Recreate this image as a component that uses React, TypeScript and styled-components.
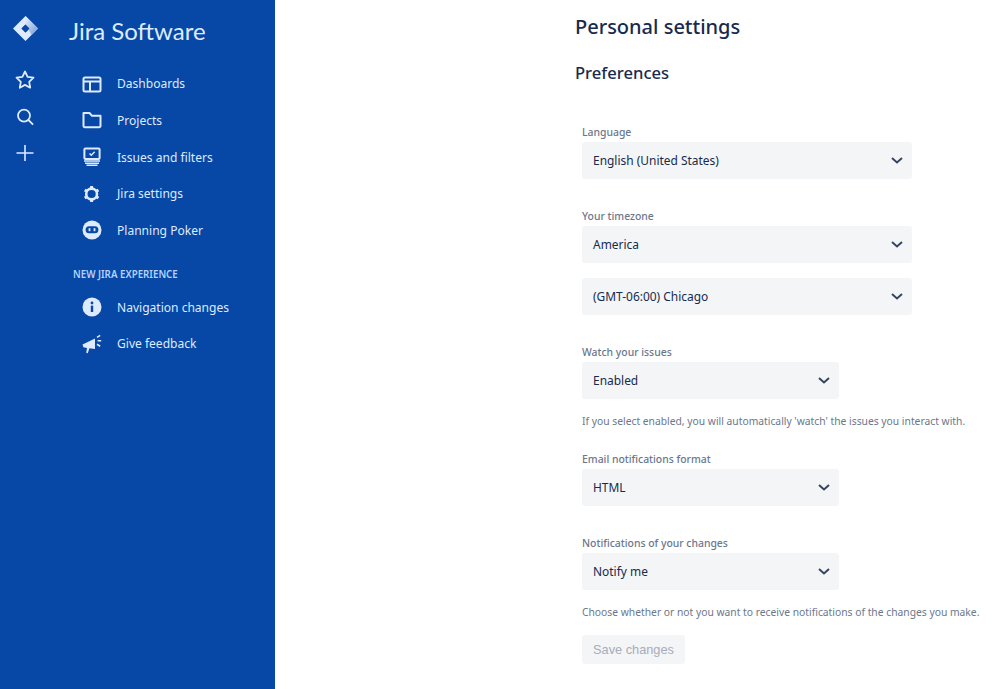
import React from "react";
import styled, { createGlobalStyle } from "styled-components";

const Global = createGlobalStyle`
  html, body { margin: 0; padding: 0; background: #fff; }
  body { font-family: "Noto Sans", "Open Sans", sans-serif; overflow: hidden; }
`;

const Page = styled.div`
  display: flex;
  width: 999px;
  height: 689px;
  overflow: hidden;
`;

const Sidebar = styled.aside`
  flex: 0 0 275px;
  display: flex;
  background: #0747a6;
  color: #deebff;
`;

const Rail = styled.div`
  flex: 0 0 51px;
  display: flex;
  flex-direction: column;
  align-items: center;
  padding-top: 15px;
  color: #deebff;
`;

const RailLogo = styled.div`
  display: flex;
  height: 28px;
  margin-bottom: 19px;
`;

const RailButton = styled.div`
  display: flex;
  align-items: center;
  justify-content: center;
  height: 36.5px;
  margin-right: 1px;
`;

const SideNav = styled.nav`
  flex: 1;
  display: flex;
  flex-direction: column;
  padding-left: 18px;
`;

const Product = styled.div`
  font-family: "Lato", sans-serif;
  font-size: 24px;
  line-height: 30px;
  color: #deebff;
  height: 65.5px;
  padding-top: 16px;
  box-sizing: border-box;
`;

const NavItem = styled.a`
  display: flex;
  align-items: center;
  height: 36.67px;
  padding-left: 12.5px;
  font-size: 12.05px;
  color: #deebff;
`;

const NavIcon = styled.span`
  display: flex;
  justify-content: center;
  width: 20px;
  margin-right: 15.5px;
`;

const NavHeading = styled.div`
  margin: 19px 0 7px 4px;
  height: 14px;
  line-height: 14px;
  font-size: 9.75px;
  font-weight: 600;
  color: #b3d4ff;
  text-transform: uppercase;
`;

const Main = styled.main`
  flex: 1;
  padding: 11px 0 0 300px;
  min-width: 0;
`;

const Title = styled.h1`
  margin: 0;
  font-size: 20px;
  line-height: 32px;
  font-weight: 500;
  color: #172b4d;
`;

const Subtitle = styled.h2`
  margin: 14px 0 0;
  font-size: 16.6px;
  line-height: 32px;
  font-weight: 500;
  color: #172b4d;
`;

const Form = styled.form`
  padding: 35px 0 0 7px;
  width: 430px;
`;

const Field = styled.div<{ $gap?: number }>`
  margin-bottom: ${(p) => p.$gap ?? 0}px;
`;

const Label = styled.div`
  font-size: 10.4px;
  line-height: 16px;
  height: 16px;
  font-weight: 500;
  color: #6b778c;
  margin-bottom: 2px;
`;

const Select = styled.div<{ $narrow?: boolean; $mt?: number }>`
  display: flex;
  align-items: center;
  justify-content: space-between;
  box-sizing: border-box;
  width: ${(p) => (p.$narrow ? 257 : 330)}px;
  height: 37px;
  margin-top: ${(p) => p.$mt ?? 0}px;
  padding: 0 7px 0 11px;
  background: #f4f5f7;
  border-radius: 3px;
  font-size: 11.95px;
  color: #172b4d;
`;

const ChevronSlot = styled.svg`
  position: relative;
  top: -1px;
`;

const Help = styled.div`
  margin-top: 14px;
  font-size: 10.3px;
  line-height: 16px;
  color: #6b778c;
  white-space: nowrap;
`;

const SaveButton = styled.button`
  display: block;
  width: 103px;
  height: 29px;
  margin-top: 15px;
  padding: 0;
  border: 0;
  border-radius: 3px;
  background: #f4f5f7;
  color: #a5adba;
  font-family: "Liberation Sans", Arial, sans-serif;
  font-size: 12.75px;
`;

const Chevron = () => (
  <ChevronSlot width="16" height="16" viewBox="0 0 16 16" fill="none">
    <path d="M3 6 8 10.4 13 6" stroke="#344563" strokeWidth="2" />
  </ChevronSlot>
);

const Logo = () => (
  <svg width="27" height="27" viewBox="0 0 27 27">
    <defs>
      <linearGradient id="lg" x1="0.2" y1="0" x2="0.9" y2="0.8">
        <stop offset="0" stopColor="#deebff" />
        <stop offset="1" stopColor="#86a6da" />
      </linearGradient>
    </defs>
    <path d="M13.5 1 26 13.5 13.5 26 1 13.5Z M13.5 9.5 9.5 13.5 13.5 17.5 17.5 13.5Z" fill="#deebff" fillRule="evenodd" />
    <path d="M13.5 1 26 13.5 19.5 20 13.5 9.5Z" fill="url(#lg)" />
    <path d="M13.5 9.5 17.5 13.5 13.5 17.5 9.5 13.5Z" fill="#0747a6" />
  </svg>
);

const stroke = { fill: "none", stroke: "currentColor", strokeWidth: 2 } as const;

const Star = () => (
  <svg width="20" height="20" viewBox="0 0 20 20" fill="none" stroke="currentColor" strokeWidth="1.8" strokeLinejoin="round">
    <path d="M10 1.5l2.6 5.4 5.9.8-4.3 4.1 1 5.9-5.2-2.8-5.2 2.8 1-5.9-4.3-4.1 5.9-.8z" />
  </svg>
);
const Search = () => (
  <svg width="20" height="20" viewBox="0 0 20 20" fill="none" stroke="currentColor" strokeWidth="1.8">
    <circle cx="9" cy="8.6" r="6" />
    <path d="M13.4 13 17.6 17.2" strokeLinecap="round" />
  </svg>
);
const Plus = () => (
  <svg width="20" height="20" viewBox="0 0 20 20" fill="none" stroke="currentColor" strokeWidth="1.6">
    <path d="M10 2v16M1.5 10h17" />
  </svg>
);
const Dashboards = () => (
  <svg width="20" height="20" viewBox="0 0 20 20" {...stroke}>
    <rect x="1.5" y="3.5" width="17" height="14" rx="1.5" />
    <path d="M1.5 7.5h17M8 7.5v10" />
  </svg>
);
const Folder = () => (
  <svg width="20" height="20" viewBox="0 0 20 20" {...stroke} strokeLinejoin="round">
    <path d="M1.5 3h6l2.5 2.8h8.5v10.2a1.2 1.2 0 0 1-1.2 1.2H2.7a1.2 1.2 0 0 1-1.2-1.2z" />
  </svg>
);
const Issues = () => (
  <svg width="20" height="20" viewBox="0 0 20 20" fill="none">
    <rect x="2.4" y="1.5" width="15.2" height="10.5" rx="1" stroke="currentColor" strokeWidth="2" />
    <path d="M7.5 6.5 9.3 8.3 12.7 4.8" stroke="currentColor" strokeWidth="1.5" />
    <path d="M2 14h16M3 16.2h14M4.5 18.3h11" stroke="currentColor" strokeWidth="1.4" />
  </svg>
);
const Gear = () => (
  <svg width="20" height="20" viewBox="0 0 20 20" fill="none">
    <circle cx="9.6" cy="10" r="5.4" stroke="currentColor" strokeWidth="2.6" />
    <path d="M9.6 2v2.6M9.6 15.4V18M2.7 6l2.3 1.3M14.2 12.7l2.3 1.3M2.7 14l2.3-1.3M14.2 7.3 16.5 6" stroke="currentColor" strokeWidth="3" />
  </svg>
);
const Poker = () => (
  <svg width="20" height="20" viewBox="0 0 20 20">
    <circle cx="10" cy="10" r="9.5" fill="currentColor" />
    <rect x="3.6" y="6.2" width="12.8" height="7" rx="3.5" fill="#0747a6" />
    <rect x="6.6" y="8.2" width="1.8" height="3" fill="#deebff" />
    <rect x="11.6" y="8.2" width="1.8" height="3" fill="#deebff" />
  </svg>
);
const Info = () => (
  <svg width="20" height="20" viewBox="0 0 20 20">
    <circle cx="10" cy="10" r="9.5" fill="currentColor" />
    <rect x="8.8" y="8.6" width="2.4" height="6.4" fill="#0747a6" />
    <circle cx="10" cy="6" r="1.4" fill="#0747a6" />
  </svg>
);
const Megaphone = () => (
  <svg width="20" height="20" viewBox="0 0 20 20" fill="currentColor">
    <path d="M.5 10.5 13 4.5v10.5l-5.6-.7-1.6 5-1.6-.6.8-4.8-3.6-.6z" />
    <path d="M15 3.4l3.2-2M15.6 6.8h3.6M15 10.2l3.2 2" stroke="currentColor" strokeWidth="1.6" fill="none" />
  </svg>
);

const Dropdown = ({ value, narrow, mt }: { value: string; narrow?: boolean; mt?: number }) => (
  <Select $narrow={narrow} $mt={mt}>
    {value}
    <Chevron />
  </Select>
);

const items = [
  ["Dashboards", <Dashboards />],
  ["Projects", <Folder />],
  ["Issues and filters", <Issues />],
  ["Jira settings", <Gear />],
  ["Planning Poker", <Poker />],
] as const;

const experience = [
  ["Navigation changes", <Info />],
  ["Give feedback", <Megaphone />],
] as const;

export default function App() {
  return (
    <Page>
      <Global />
      <Sidebar>
        <Rail>
          <RailLogo><Logo /></RailLogo>
          <RailButton><Star /></RailButton>
          <RailButton><Search /></RailButton>
          <RailButton><Plus /></RailButton>
        </Rail>
        <SideNav>
          <Product>Jira Software</Product>
          {items.map(([label, icon]) => (
            <NavItem key={label}><NavIcon>{icon}</NavIcon>{label}</NavItem>
          ))}
          <NavHeading>New Jira experience</NavHeading>
          {experience.map(([label, icon]) => (
            <NavItem key={label}><NavIcon>{icon}</NavIcon>{label}</NavItem>
          ))}
        </SideNav>
      </Sidebar>
      <Main>
        <Title>Personal settings</Title>
        <Subtitle>Preferences</Subtitle>
        <Form>
          <Field $gap={29}>
            <Label>Language</Label>
            <Dropdown value="English (United States)" />
          </Field>
          <Field $gap={29}>
            <Label>Your timezone</Label>
            <Dropdown value="America" />
            <Dropdown value="(GMT-06:00) Chicago" mt={15} />
          </Field>
          <Field $gap={22}>
            <Label>Watch your issues</Label>
            <Dropdown value="Enabled" narrow />
            <Help>If you select enabled, you will automatically 'watch' the issues you interact with.</Help>
          </Field>
          <Field $gap={29}>
            <Label>Email notifications format</Label>
            <Dropdown value="HTML" narrow />
          </Field>
          <Field>
            <Label>Notifications of your changes</Label>
            <Dropdown value="Notify me" narrow />
            <Help>Choose whether or not you want to receive notifications of the changes you make.</Help>
          </Field>
          <SaveButton type="button" disabled>Save changes</SaveButton>
        </Form>
      </Main>
    </Page>
  );
}
